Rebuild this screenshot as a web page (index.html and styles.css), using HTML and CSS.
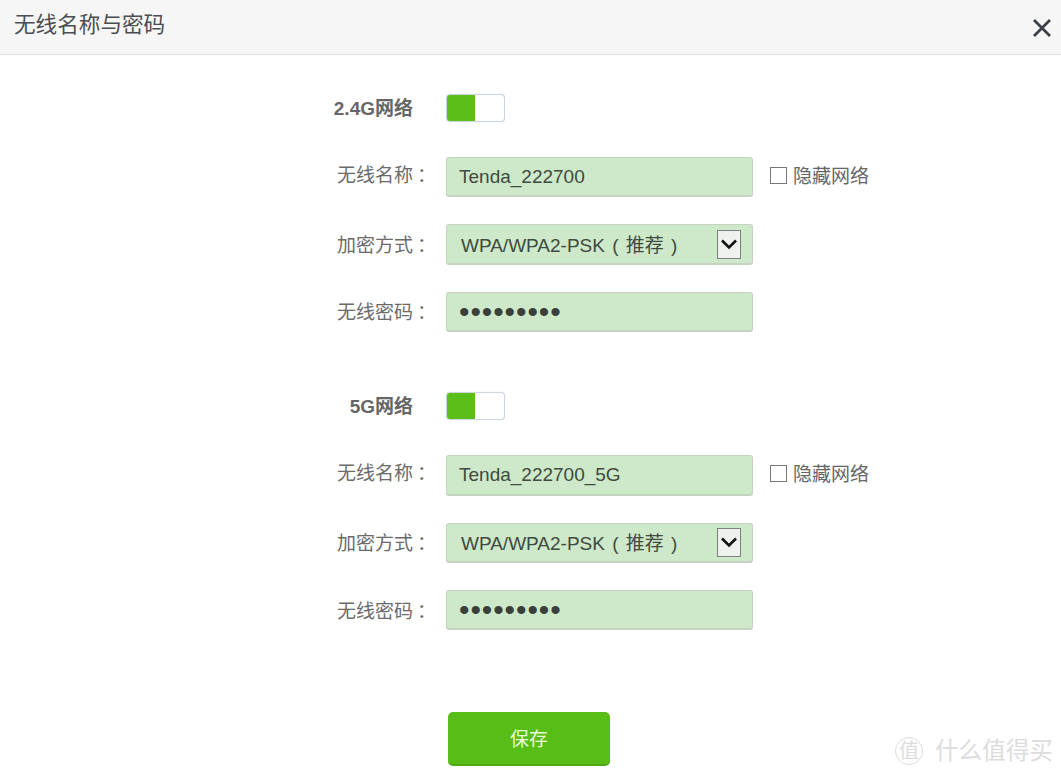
FILE: index.html
```html
<!DOCTYPE html>
<html lang="zh-CN">
<head>
  <meta charset="UTF-8" />
  <meta name="viewport" content="width=device-width, initial-scale=1.0"/>
  <title>无线名称与密码</title>
  <link rel="stylesheet" href="styles.css">
</head>
<body>

  <header class="dialog-head">
    <h1>无线名称与密码</h1>
    <button class="close-btn" aria-label="关闭">
      <svg width="20" height="20" viewBox="0 0 20 20"><path d="M2 2 L18 18 M18 2 L2 18" stroke="#3c4148" stroke-width="2.8" fill="none"/></svg>
    </button>
  </header>

  <form class="wifi-form">

    <section class="band">
      <div class="row switch-row">
        <label class="field-label strong">2.4G网络</label>
        <div class="switch"><span class="switch-on"></span><span class="switch-knob"></span></div>
      </div>
      <div class="row">
        <label class="field-label raised">无线名称<span class="colon">：</span></label>
        <input class="field" type="text" value="Tenda_222700">
        <label class="hide-ssid"><input type="checkbox">隐藏网络</label>
      </div>
      <div class="row">
        <label class="field-label">加密方式<span class="colon">：</span></label>
        <div class="field select-field">
          <span class="select-text">WPA/WPA2-PSK ( 推荐 )</span>
          <span class="select-arrow">
            <svg width="18" height="11" viewBox="0 0 18 11"><path d="M2 1.5 L9 8.5 L16 1.5" stroke="#111" stroke-width="2.6" fill="none"/></svg>
          </span>
        </div>
      </div>
      <div class="row">
        <label class="field-label">无线密码<span class="colon">：</span></label>
        <input class="field pass" type="password" value="123456789">
      </div>
    </section>

    <section class="band">
      <div class="row switch-row">
        <label class="field-label strong">5G网络</label>
        <div class="switch"><span class="switch-on"></span><span class="switch-knob"></span></div>
      </div>
      <div class="row">
        <label class="field-label raised">无线名称<span class="colon">：</span></label>
        <input class="field" type="text" value="Tenda_222700_5G">
        <label class="hide-ssid"><input type="checkbox">隐藏网络</label>
      </div>
      <div class="row">
        <label class="field-label">加密方式<span class="colon">：</span></label>
        <div class="field select-field">
          <span class="select-text">WPA/WPA2-PSK ( 推荐 )</span>
          <span class="select-arrow">
            <svg width="18" height="11" viewBox="0 0 18 11"><path d="M2 1.5 L9 8.5 L16 1.5" stroke="#111" stroke-width="2.6" fill="none"/></svg>
          </span>
        </div>
      </div>
      <div class="row">
        <label class="field-label">无线密码<span class="colon">：</span></label>
        <input class="field pass" type="password" value="123456789">
      </div>
    </section>

    <button class="save-btn" type="button">保存</button>
  </form>

  <div class="watermark">
    <span class="watermark-seal">值</span>
    <span>什么值得买</span>
  </div>

</body>
</html>
```

FILE: styles.css
```css
* {
  box-sizing: border-box;
}

body {
  margin: 0;
  height: 777px;
  overflow: hidden;
  position: relative;
  background: #fff;
  font-family: "Liberation Sans", "Noto Sans CJK SC", sans-serif;
  font-size: 19px;
  color: #666;
}

.dialog-head {
  height: 55px;
  background: #f6f6f6;
  border-bottom: 1px solid #e2e2e2;
  display: flex;
  justify-content: space-between;
  padding: 0 0 0 14px;
}

.dialog-head h1 {
  margin: 7px 0 0;
  font-size: 21.6px;
  font-weight: 400;
  line-height: 36px;
  color: #4a4d52;
}

.close-btn {
  background: none;
  border: none;
  padding: 0;
  margin: 18px 9px 0 0;
  width: 20px;
  height: 20px;
  display: block;
}

.close-btn svg {
  display: block;
}

.wifi-form {
  padding: 39px 0 0 312px;
}

.band {
  display: flex;
  flex-direction: column;
  gap: 27px;
  margin-bottom: 60px;
}

.row {
  display: flex;
  align-items: center;
  height: 40.4px;
}

.switch-row {
  height: 28px;
  margin-bottom: 8px;
}

.field-label {
  width: 120px;
  margin-right: 14px;
  padding-bottom: 2px;
  text-align: right;
  color: #6b6b6b;
}

.field-label.strong {
  font-weight: 700;
  padding-right: 19px;
  padding-bottom: 3px;
  color: #666;
}

.field-label.raised {
  padding-bottom: 8px;
}

.colon {
  font-family: "Noto Sans CJK TC", sans-serif;
  margin-left: 4px;
  margin-right: -4px;
}

.switch {
  width: 59px;
  height: 28px;
  display: flex;
  border: 1px solid #cfd6dd;
  border-radius: 4px;
  overflow: hidden;
  background: #fff;
  box-shadow: 0 0 1px #c4ccd4;
}

.switch-on {
  width: 28px;
  background: #5cbf19;
}

.switch-knob {
  flex: 1;
}

.field {
  width: 307px;
  height: 40.4px;
  background: #cde9c9;
  border: 1px solid #c6d3c3;
  border-bottom-width: 2px;
  border-radius: 3px;
  padding: 1px 12px 0;
  font-family: inherit;
  font-size: 19px;
  color: #3f4a40;
  outline: none;
}

.pass {
  font-size: 30px;
  letter-spacing: 0.9px;
  color: #3a3f3a;
}

.select-field {
  display: flex;
  align-items: center;
  justify-content: space-between;
  padding: 0 11px 0 14px;
}

.select-text {
  word-spacing: 2px;
  margin-bottom: 2px;
}

.select-arrow {
  width: 24px;
  height: 29px;
  display: flex;
  align-items: center;
  justify-content: center;
  background: #eef1ee;
  border: 1px solid #7d817d;
}

.hide-ssid {
  display: flex;
  align-items: center;
  gap: 6px;
  margin-left: 17px;
  padding-bottom: 6px;
  color: #666;
}

.hide-ssid input {
  appearance: none;
  margin: 2px 0 0;
  width: 17px;
  height: 17px;
  background: #fff;
  border: 1px solid #777;
}

.save-btn {
  display: block;
  width: 162px;
  height: 54px;
  margin: 81.6px 0 0 136px;
  background: #58bd17;
  border: none;
  border-bottom: 2px solid #4da812;
  border-radius: 5px;
  color: #eaf8dc;
  font-family: inherit;
  font-size: 19px;
}

.watermark {
  position: absolute;
  right: 8px;
  bottom: 11px;
  display: flex;
  align-items: center;
  gap: 12px;
  font-size: 23.6px;
  line-height: 30px;
  color: #dcdcdc;
}

.watermark-seal {
  width: 28px;
  height: 28px;
  border: 1px solid #dcdcdc;
  border-radius: 50%;
  font-size: 20px;
  line-height: 26px;
  text-align: center;
}
```
